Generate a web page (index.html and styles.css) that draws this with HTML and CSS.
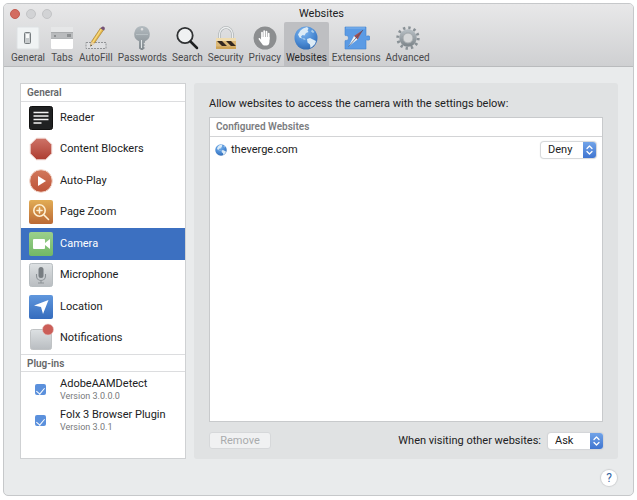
FILE: index.html
```html
<!DOCTYPE html>
<html lang="en">
<head>
  <meta charset="UTF-8" />
  <meta name="viewport" content="width=device-width, initial-scale=1.0" />
  <title>Websites</title>
  <link rel="stylesheet" href="styles.css">
</head>
<body>
  <!-- Shared gradients and symbols -->
  <svg class="defs" width="0" height="0" aria-hidden="true">
    <defs>
      <radialGradient id="sea" cx="40%" cy="25%" r="80%">
        <stop offset="0" stop-color="#7db5ee" /><stop offset=".6" stop-color="#4a8ad4" /><stop offset="1" stop-color="#2f68b0" />
      </radialGradient>
      <linearGradient id="silver" x2="0" y2="1"><stop stop-color="#b3bbc0" /><stop offset="1" stop-color="#81898e" /></linearGradient>
      <linearGradient id="light" x2="0" y2="1"><stop stop-color="#dde1e3" /><stop offset="1" stop-color="#b9bdc1" /></linearGradient>
      <linearGradient id="red" x2="0" y2="1"><stop stop-color="#ce7468" /><stop offset="1" stop-color="#ad3c30" /></linearGradient>
      <linearGradient id="rust" x2="0" y2="1"><stop stop-color="#d2795c" /><stop offset="1" stop-color="#bd5338" /></linearGradient>
      <linearGradient id="amber" x2="0" y2="1"><stop stop-color="#e2ad55" /><stop offset="1" stop-color="#bb6935" /></linearGradient>
      <linearGradient id="green" x2="0" y2="1"><stop stop-color="#9bd08b" /><stop offset="1" stop-color="#72b866" /></linearGradient>
      <linearGradient id="blue" x2="0" y2="1"><stop stop-color="#6097dd" /><stop offset="1" stop-color="#356cbd" /></linearGradient>
      <symbol id="globe" viewBox="0 0 24 24">
        <circle cx="12" cy="12" r="11.5" fill="url(#sea)" />
        <path fill="#dcebf6" d="M6.500 4.500L9 2.500l4-1.500 1.500 1.500-1 2 1 1.500-2.500 1-1.500 2.500-2-.5-1.500 1.500 1 2-2.500-1L4 8.500zM13 13l3-1 3 1.500 3 1.500-1 3-2.500 2.500-2 1.500-.5-3.500-2.500-2z" />
        <path fill="#a9cdec" d="M18 3.500l2.500 2.500-1.500 1-2-1.500zM8 12l3 .5.500 1.500-2-.5z" />
      </symbol>
      <symbol id="arrows" viewBox="0 0 13 16">
        <path d="M4 6.500L6.500 4 9 6.500M4 9.500L6.500 12 9 9.500" fill="none" stroke="#fff" stroke-width="1.300" stroke-linecap="round" stroke-linejoin="round" />
      </symbol>
    </defs>
  </svg>

  <div class="window">
    <header class="titlebar">
      <div class="title-row">
        <div class="lights">
          <button class="light close" aria-label="Close"></button>
          <button class="light" aria-label="Minimize" disabled></button>
          <button class="light" aria-label="Zoom" disabled></button>
        </div>
        <h1>Websites</h1>
      </div>

      <nav class="toolbar">
        <button class="tool">
          <svg viewBox="0 0 24 24"><rect x="1" y="1" width="22" height="22" rx="1" fill="#f0f3f4" stroke="#dde1e3" /><rect x="8.500" y="6.500" width="6" height="11" rx="1" fill="#c7cbcd" stroke="#777d80" /><rect x="10" y="8" width="3" height="4" fill="#f8f9f9" /></svg>
          <span>General</span>
        </button>
        <button class="tool">
          <svg viewBox="0 0 24 24"><path fill="#e6e7e8" d="M1 1h22v6H1z" /><path fill="#b9bbbd" d="M1 6h22v7H1z" /><path d="M1 6.500h22" stroke="#a9abad" /><path fill="#fff" d="M1 13h22v8.500q0 1.500-1.500 1.500h-19Q1 23 1 21.500z" /><path d="M1 12.500h22" stroke="#b0b3b5" /><path fill="#8c8f91" d="M4 9h2v2H4zM17 8h4v3h-4z" /></svg>
          <span>Tabs</span>
        </button>
        <button class="tool">
          <svg viewBox="0 0 24 24"><path d="M2 16.500h20v6H2z" fill="#dedfe1" stroke="#929497" stroke-dasharray="2 1" /><path d="M6.500 20l1-4.500L16.500 2l3 2-9 13z" fill="#e5b84e" stroke="#9f7928" stroke-width=".6" /><path d="M9 16L17.500 3" stroke="#f8dd83" stroke-width="1.200" /><path d="M6.500 20.500l1-5 3 2z" fill="#e9d1a6" /><path d="M6.500 20.500l.5-2 1 1z" fill="#333" /><path d="M16.500 2.500Q18-.5 20 .8q1.700 1.400 0 3.700z" fill="#755376" /></svg>
          <span>AutoFill</span>
        </button>
        <button class="tool">
          <svg viewBox="0 0 24 24"><path fill="url(#silver)" fill-rule="evenodd" d="M12 0a8 8 0 0 0-3 15.300v7.200L12 24.500l3-2.500-1.500-1.500 1.500-1.500-1.500-1.500 1.500-1v-1.200A8 8 0 0 0 12 0zm0 2a1.300 1.300 0 1 1 0 2.600A1.300 1.300 0 0 1 12 2z" /><path d="M11.500 14v8" stroke="#e1e6e8" /><path d="M6 8.500h12" stroke="#b8c0c4" /></svg>
          <span>Passwords</span>
        </button>
        <button class="tool">
          <svg viewBox="0 0 24 24"><circle cx="10" cy="9.500" r="7.700" fill="#eff1f2" stroke="#303234" stroke-width="1.800" /><path d="M15.500 15.500L22 22" stroke="#1e2021" stroke-width="2.500" stroke-linecap="round" /></svg>
          <span>Search</span>
        </button>
        <button class="tool">
          <svg viewBox="0 0 24 24"><path d="M5.500 13V8.500a6.500 7 0 0 1 13 0V13" fill="none" stroke="#a5abad" stroke-width="2.600" /><path d="M5.500 12V8.500a6.500 7 0 0 1 13 0V12" fill="none" stroke="#eceeef" stroke-width="1.400" /><path fill="#dcb978" d="M2 12h20v11H2z" /><path fill="#efdcb0" d="M2 12h20v3H2z" /><path fill="#332820" d="M3 15h5l5 5H8zM12 15h5l5 5h-5z" /><path fill="#cda458" d="M2 20.500h20V23H2z" /></svg>
          <span>Security</span>
        </button>
        <button class="tool">
          <svg viewBox="0 0 24 24"><circle cx="12" cy="12" r="11.500" fill="#8c8e90" /><path fill="none" stroke="#fff" stroke-width="1.700" stroke-linecap="round" d="M9 13V6.500M11.200 12V5M13.500 12V5.500M15.700 13V7.500" /><path fill="#fff" d="M8.200 11h8.300v4q0 4-2.500 4.500h-3q-1.500-.5-3-3L5.500 13q0-1.300 1.200-1l1.500 1.800z" /></svg>
          <span>Privacy</span>
        </button>
        <button class="tool active">
          <svg><use href="#globe" /></svg>
          <span>Websites</span>
        </button>
        <button class="tool">
          <svg class="wide" viewBox="0 0 28 24"><path fill="#5b9be5" stroke="#4484ce" stroke-width=".6" d="M3 1h21v8.500q.2 1 1 .5 3-1 3 2t-3 2q-.8-.5-1 .5V23H3v-8q.3-1 1-.5 2.500.5 2.500-2.500T4 9.500q-.8.500-1-.5z" /><path d="M4 2h19" stroke="#83b5ed" /><path fill="#a8504f" d="M21 4l-9 6 3.500 3.500z" /><path fill="#f3f4f5" d="M6.500 20.500L12 10l3.500 3.500z" /><path d="M21 4L6.500 20.500" stroke="#3b5274" stroke-width=".7" /></svg>
          <span>Extensions</span>
        </button>
        <button class="tool">
          <svg viewBox="0 0 24 24"><circle cx="12" cy="12" r="10.200" fill="none" stroke="#899196" stroke-width="3" stroke-dasharray="2.340 3" /><circle cx="12" cy="12" r="7" fill="none" stroke="url(#silver)" stroke-width="3.500" /><circle cx="12" cy="12" r="5" fill="#d5d7d8" stroke="#8b9296" stroke-width=".7" /></svg>
          <span>Advanced</span>
        </button>
      </nav>
    </header>

    <main class="content">
      <aside class="sidebar">
        <h2>General</h2>
        <ul class="settings">
          <li><a href="#reader">
            <svg viewBox="0 0 24 24"><rect x=".5" y=".5" width="23" height="23" rx="2" fill="#202122" stroke="#111" /><path d="M4.500 6.500h15M4.500 10h15M4.500 13.500h15M4.500 17h8" stroke="#f3f3f3" stroke-width="1.600" /></svg>
            Reader</a></li>
          <li><a href="#blockers">
            <svg viewBox="0 0 24 24"><path fill="url(#red)" stroke="#f0d8d3" d="M7.500 1.200h9l6.300 6.300v9l-6.300 6.300h-9l-6.300-6.300v-9z" /></svg>
            Content Blockers</a></li>
          <li><a href="#autoplay">
            <svg viewBox="0 0 24 24"><circle cx="12" cy="12" r="11.300" fill="url(#rust)" stroke="#f3d9ce" /><path fill="#fff" d="M9 7l8 5-8 5z" /></svg>
            Auto-Play</a></li>
          <li><a href="#zoom">
            <svg viewBox="0 0 24 24"><rect width="24" height="24" rx="2" fill="url(#amber)" /><circle cx="10.500" cy="10.500" r="5.700" fill="none" stroke="#fff1d4" stroke-width="1.600" /><path d="M15 15l4.500 4.500M10.500 8v5M8 10.500h5" stroke="#fff1d4" stroke-width="1.600" stroke-linecap="round" /></svg>
            Page Zoom</a></li>
          <li><a class="selected" href="#camera">
            <svg viewBox="0 0 24 24"><rect width="24" height="24" rx="2" fill="url(#green)" /><rect x="4" y="7" width="12" height="10" rx="1" fill="#fff" /><path fill="#fff" d="M16 11l5-4v10l-5-4z" /></svg>
            Camera</a></li>
          <li><a href="#microphone">
            <svg viewBox="0 0 24 24"><rect x=".5" y=".5" width="23" height="23" rx="2" fill="url(#light)" stroke="#b8bec1" /><rect x="9.500" y="4" width="5" height="11" rx="2.500" fill="#777d81" /><path d="M7.500 11v2a4.500 4.500 0 0 0 9 0v-2M12 18v2M9 20h6" fill="none" stroke="#8c9296" stroke-width="1.100" /></svg>
            Microphone</a></li>
          <li><a href="#location">
            <svg viewBox="0 0 24 24"><rect width="24" height="24" rx="2" fill="url(#blue)" /><path fill="#fff" d="M19.500 5L14 19l-2-7-7-1.500z" /></svg>
            Location</a></li>
          <li><a href="#notifications">
            <svg viewBox="0 0 24 24"><rect x="1.500" y="3.500" width="21" height="20" rx="2" fill="url(#light)" stroke="#c0c3c5" /><circle cx="19" cy="3.500" r="5.500" fill="#cb5e58" stroke="#e6c6c4" stroke-width=".6" /></svg>
            Notifications</a></li>
        </ul>
        <h2 class="plugins-title">Plug-ins</h2>
        <div class="plugins">
          <label class="plugin">
            <input type="checkbox" checked>
            <span>AdobeAAMDetect<small>Version 3.0.0.0</small></span>
          </label>
          <label class="plugin">
            <input type="checkbox" checked>
            <span>Folx 3 Browser Plugin<small>Version 3.0.1</small></span>
          </label>
        </div>
      </aside>

      <section class="panel">
        <p>Allow websites to access the camera with the settings below:</p>
        <div class="site-list">
          <table>
            <thead>
              <tr><th colspan="2">Configured Websites</th></tr>
            </thead>
            <tbody>
              <tr>
                <td><label class="site" for="siteRule"><svg><use href="#globe" /></svg>theverge.com</label></td>
                <td class="rule">
                  <span class="picker">
                    <select id="siteRule"><option>Ask</option><option selected>Deny</option><option>Allow</option></select>
                    <svg><use href="#arrows" /></svg>
                  </span>
                </td>
              </tr>
            </tbody>
          </table>
        </div>
        <div class="panel-footer">
          <button class="remove" disabled>Remove</button>
          <label for="otherRule">When visiting other websites:</label>
          <span class="picker">
            <select id="otherRule"><option selected>Ask</option><option>Deny</option><option>Allow</option></select>
            <svg><use href="#arrows" /></svg>
          </span>
        </div>
      </section>
    </main>

    <footer class="window-footer">
      <button class="help" aria-label="Help">?</button>
    </footer>
  </div>
</body>
</html>
```
FILE: styles.css
```css
* {
  box-sizing: border-box;
}

body {
  margin: 0;
  padding: 3px;
  min-height: 100vh;
  display: flex;
  background: #fff;
  color: #202122;
  font-family: Roboto, "Liberation Sans", sans-serif;
  font-size: 11px;
  line-height: 14px;
}

button,
select {
  font: inherit;
  color: inherit;
}

h1,
h2,
p,
ul {
  margin: 0;
  padding: 0;
}

.defs {
  position: absolute;
}

.window {
  flex: 1;
  display: flex;
  flex-direction: column;
  margin-bottom: 1px;
  border: 1px solid #c6c8ca;
  border-radius: 5px;
  background: #e9ebec;
  overflow: hidden;
}

/* Title bar and toolbar */
.titlebar {
  background: linear-gradient(#e8e8e9, #cfd0d2);
  border-bottom: 1px solid #b9bbbd;
}

.title-row {
  display: grid;
  grid-template-columns: 1fr auto 1fr;
  align-items: center;
  height: 18px;
  padding: 2px 0 0 6px;
}

.title-row h1 {
  font-size: 11px;
  font-weight: 400;
}

.lights {
  display: flex;
  gap: 6px;
}

.light {
  width: 10px;
  height: 10px;
  padding: 0;
  border: 1px solid #c3c4c6;
  border-radius: 50%;
  background: #d2d3d5;
}

.light.close {
  background: #d36c60;
  border-color: #c35b50;
}

.toolbar {
  display: flex;
  gap: 1px;
  padding-left: 5px;
}

.tool {
  display: flex;
  flex-direction: column;
  align-items: center;
  gap: 1px;
  height: 44px;
  padding: 4px 2px 0;
  border: none;
  background: none;
  font-size: 10px;
  color: #48494b;
}

.tool svg {
  width: 24px;
  height: 24px;
}

.tool svg.wide {
  width: 28px;
}

.tool.active {
  background: #bebfc2;
  color: #242526;
  border-radius: 2px 2px 0 0;
}

/* Content */
.content {
  flex: 1;
  display: flex;
  gap: 8px;
  padding: 16px 15px 0 16px;
}

.sidebar {
  flex: 0 0 166px;
  display: flex;
  flex-direction: column;
  background: #fff;
  border: 1px solid #cfd1d3;
}

.sidebar h2 {
  height: 18px;
  padding: 2px 6px;
  border-bottom: 1px solid #dcdddf;
  font-size: 10px;
  font-weight: 600;
  color: #66686a;
}

.sidebar .plugins-title {
  border-top: 1px solid #dcdddf;
}

.settings {
  flex: 1;
  display: flex;
  flex-direction: column;
  list-style: none;
}

.settings li {
  flex: 1;
  display: flex;
}

.settings a {
  flex: 1;
  display: flex;
  align-items: center;
  gap: 7px;
  padding-left: 8px;
  color: inherit;
  text-decoration: none;
}

.settings svg {
  width: 24px;
  height: 24px;
  overflow: visible;
}

.settings a.selected {
  background: #3c70c1;
  color: #fff;
}

.plugins {
  padding: 2px 0 22px 14px;
}

.plugin {
  display: flex;
  align-items: center;
  gap: 14px;
  height: 31px;
}

.plugin input {
  appearance: none;
  display: grid;
  place-items: center;
  width: 11px;
  height: 11px;
  margin: 0;
  border-radius: 2px;
  background: #5b90dc;
}

.plugin input:checked::before {
  content: "";
  width: 4px;
  height: 7px;
  border: solid #fff;
  border-width: 0 1px 1px 0;
  transform: rotate(40deg);
}

.plugin small {
  display: block;
  font-size: 9px;
  line-height: 11px;
  color: #77797b;
}

.panel {
  flex: 1;
  display: flex;
  flex-direction: column;
  padding: 14px 15px 10px;
  background: #e0e2e3;
  border-radius: 3px;
}

.site-list {
  flex: 1;
  margin: 6px 0 10px;
  background: #fff;
  border: 1px solid #c8cacc;
}

.site-list table {
  width: 100%;
  border-collapse: collapse;
}

.site-list th {
  height: 18px;
  padding: 0 6px;
  border-bottom: 1px solid #d3d4d6;
  text-align: left;
  font-size: 10px;
  font-weight: 600;
  color: #7b7d7f;
}

.site-list td {
  height: 28px;
  padding: 0 5px;
}

.site {
  display: flex;
  align-items: center;
  gap: 4px;
}

.site svg {
  width: 12px;
  height: 12px;
}

.site-list .rule {
  width: 66px;
}

.picker {
  position: relative;
  display: block;
  width: 55px;
}

.picker select {
  appearance: none;
  display: block;
  width: 100%;
  height: 16px;
  padding: 0 14px 0 7px;
  border: none;
  border-radius: 3px;
  background: #fff;
  box-shadow: 0 0 1px 1px #d3d5d7;
}

/* Blue stepper on the right end of the select */
.picker svg {
  position: absolute;
  top: 0;
  right: 0;
  width: 13px;
  height: 16px;
  border-radius: 0 3px 3px 0;
  background: linear-gradient(#71a3e8, #3f75d0);
  pointer-events: none;
}

.panel-footer {
  display: flex;
  align-items: center;
  gap: 7px;
}

.remove {
  width: 62px;
  height: 17px;
  margin-right: auto;
  padding: 0;
  border: 1px solid #d6d8da;
  border-radius: 3px;
  background: #f0f1f2;
  color: #a9abad;
}

.window-footer {
  display: flex;
  justify-content: flex-end;
  height: 36px;
  padding: 11px 16px 0;
}

.help {
  width: 16px;
  height: 16px;
  padding: 0;
  border: none;
  border-radius: 50%;
  background: #fff;
  box-shadow: 0 0 1px 1px #cfd1d3;
  color: #35649f;
  font-size: 12px;
}
```
